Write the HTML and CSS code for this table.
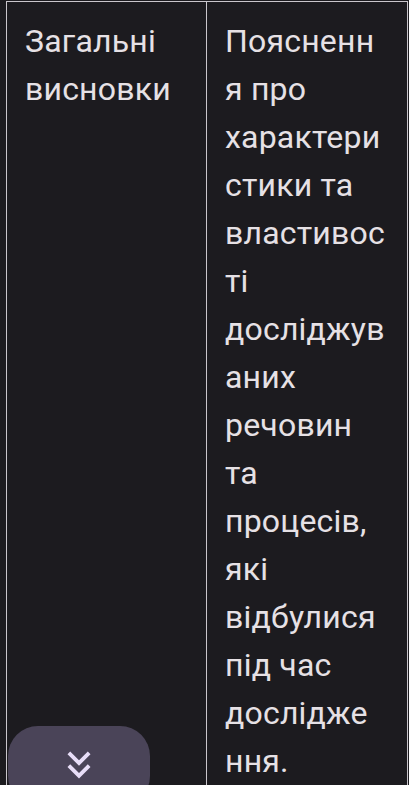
FILE: index.html
```html
<!DOCTYPE html>
<html lang="uk">
<head>
<meta charset="utf-8">
<link rel="stylesheet" href="styles.css">
</head>
<body>
<div class="page">
  <table class="grid">
    <colgroup>
      <col class="col-left">
      <col class="col-right">
    </colgroup>
    <tr>
      <td class="cell">Загальні висновки</td>
      <td class="cell">Пояснення про характеристики та властивості досліджуваних речовин та процесів, які відбулися під час дослідження.</td>
    </tr>
  </table>
</div>
<button class="fab" aria-label="Згорнути">
  <svg class="fab-icon" viewBox="0 0 24 24" width="46" height="46"><path d="M18 6.41 16.59 5 12 9.58 7.41 5 6 6.41l6 6z M18 13 16.59 11.59 12 16.17 7.41 11.59 6 13l6 6z" fill="currentColor"/></svg>
</button>
</body>
</html>
```
FILE: styles.css
```css
html, body {
  margin: 0;
  padding: 0;
  background: #1c1b1f;
  overflow: hidden;
  height: 100%;
}
.page {
  padding: 1px 2px 0 6px;
}
.grid {
  border-collapse: collapse;
  width: 401px;
  table-layout: fixed;
  font-family: Roboto, "Noto Sans", sans-serif;
  font-size: 32px;
  line-height: 48px;
  color: #e6e1e5;
  letter-spacing: 0.2px;
}
.col-left {
  width: 200px;
}
.col-right {
  width: 201px;
}
.cell {
  border: 1px solid #cac6cc;
  vertical-align: top;
  padding: 15px 21px 0 18px;
  overflow-wrap: anywhere;
  word-break: break-word;
}
.fab {
  position: fixed;
  left: 8px;
  top: 726px;
  width: 142px;
  height: 80px;
  border: none;
  border-radius: 30px;
  background: #4a4458;
  color: #e8def8;
  display: flex;
  align-items: flex-start;
  justify-content: center;
  padding: 16px 0 0 0;
}
.fab-icon {
  display: block;
}
```
